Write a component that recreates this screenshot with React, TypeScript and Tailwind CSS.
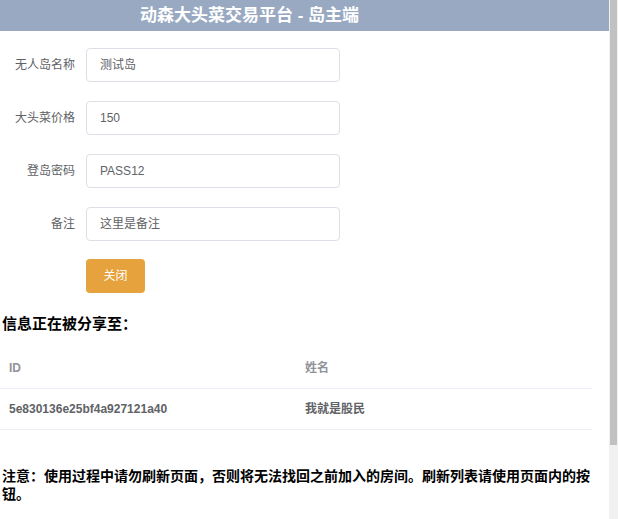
// 岛主端 — island owner panel
// Form for island info, share list table, and a usage note.

const fields = [
  { label: "无人岛名称", value: "测试岛" },
  { label: "大头菜价格", value: "150" },
  { label: "登岛密码", value: "PASS12" },
  { label: "备注", value: "这里是备注" },
];

const sharedTo = [{ id: "5e830136e25bf4a927121a40", name: "我就是股民" }];

export default function App() {
  return (
    <div
      className="flex h-[519px] w-[618px] overflow-hidden bg-white"
      style={{ fontFamily: '"Liberation Sans", "Noto Sans CJK SC", sans-serif' }}
    >
      <div className="w-[609px] shrink-0">
        {/* ── Header bar ── */}
        <div className="flex h-[31px] items-center bg-[#98a9c1] pl-[140px]">
          <h1 className="text-[17px] font-bold leading-none text-white">
            动森大头菜交易平台 - 岛主端
          </h1>
        </div>

        {/* ── Form ── */}
        <div className="pt-[17px]">
          {fields.map((f) => (
            <div key={f.label} className="mb-[19px] flex items-center">
              <label className="w-[86px] shrink-0 pr-[11px] text-right text-[12px] text-[#606266]">
                {f.label}
              </label>
              <div className="flex h-[34px] w-[254px] items-center rounded-[4px] border border-[#dcdfe6] px-[13px] text-[12px] text-[#606266]">
                {f.value}
              </div>
            </div>
          ))}
          <div className="-mt-[1px] flex pl-[86px]">
            <button className="h-[34px] w-[59px] rounded-[4px] bg-[#e6a23c] text-[12px] text-white">
              关闭
            </button>
          </div>
        </div>

        {/* ── Shared list ── */}
        <h2 className="mt-[20px] pl-[2px] text-[15px] font-bold leading-[21px] text-black">
          信息正在被分享至：
        </h2>
        <div className="mt-[14px] w-[592px] text-[12px]">
          <div className="grid h-[41px] grid-cols-[295px_1fr] items-center border-b border-[#ebeef5] font-bold text-[#909399]">
            <div className="pl-[9px]">ID</div>
            <div className="pl-[10px]">姓名</div>
          </div>
          {sharedTo.map((r) => (
            <div
              key={r.id}
              className="grid h-[41px] grid-cols-[295px_1fr] items-center border-b border-[#ebeef5] font-bold text-[#606266]"
            >
              <div className="pl-[9px]">{r.id}</div>
              <div className="pl-[10px]">{r.name}</div>
            </div>
          ))}
        </div>

        {/* ── Note ── */}
        <p className="mt-[37px] w-[594px] pl-[2px] text-[14px] font-bold leading-[18px] text-black">
          注意：使用过程中请勿刷新页面，否则将无法找回之前加入的房间。刷新列表请使用页面内的按钮。
        </p>
      </div>

      {/* scrollbar */}
      <div className="w-[9px] shrink-0 bg-[#f1f1f1]">
        <div className="mx-[1px] h-[445px] bg-[#c1c1c1]" />
      </div>
    </div>
  );
}
